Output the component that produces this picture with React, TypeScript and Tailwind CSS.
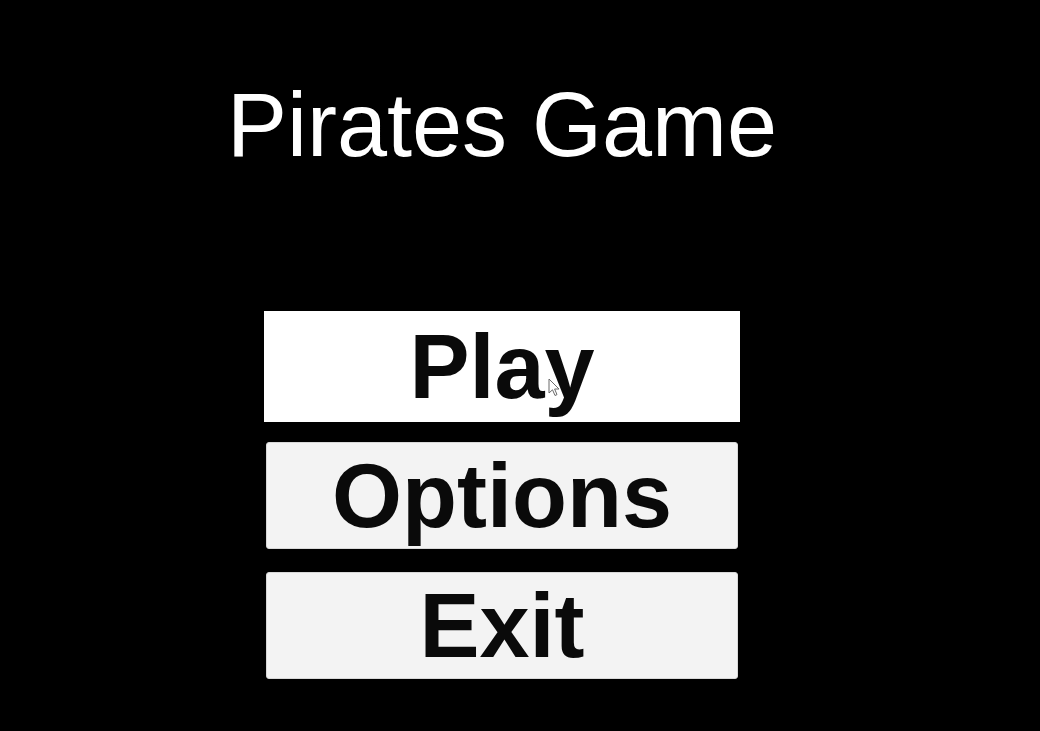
import React from "react";

const items = ["Play", "Options", "Exit"];

function Cursor() {
  return (
    <svg
      className="absolute left-[548px] top-[378px]"
      width="13"
      height="20"
      viewBox="0 0 13 20"
    >
      <path
        d="M1 1 L1 15 L4.5 11.8 L7 17.5 L9 16.6 L6.6 11 L11 11 Z"
        fill="#ffffff"
        stroke="#6b6b6b"
        strokeWidth="1"
        strokeLinejoin="round"
      />
    </svg>
  );
}

export default function App() {
  return (
    <div className="relative w-[1040px] h-[731px] bg-black overflow-hidden font-['Liberation_Sans',Arial,sans-serif]">
      <div className="flex flex-col items-center w-[472px] ml-[266px] pt-[80px]">
        <h1 className="text-[90px] leading-none text-white whitespace-nowrap font-normal">
          Pirates Game
        </h1>
        <div className="mt-[143px] flex flex-col gap-[23px] w-full">
          {items.map((label, i) => (
            <button
              key={label}
              className={
                i === 0
                  ? "h-[107px] w-full -mb-[1px] flex items-center justify-center bg-white ring-2 ring-white text-[90px] leading-none font-bold text-[#0a0a0a]"
                  : "h-[107px] w-full flex items-center justify-center bg-[#f3f3f3] rounded-[3px] border border-[#d8d8d8] text-[90px] leading-none font-bold text-[#0a0a0a]"
              }
            >
              {label}
            </button>
          ))}
        </div>
      </div>
      <Cursor />
    </div>
  );
}
